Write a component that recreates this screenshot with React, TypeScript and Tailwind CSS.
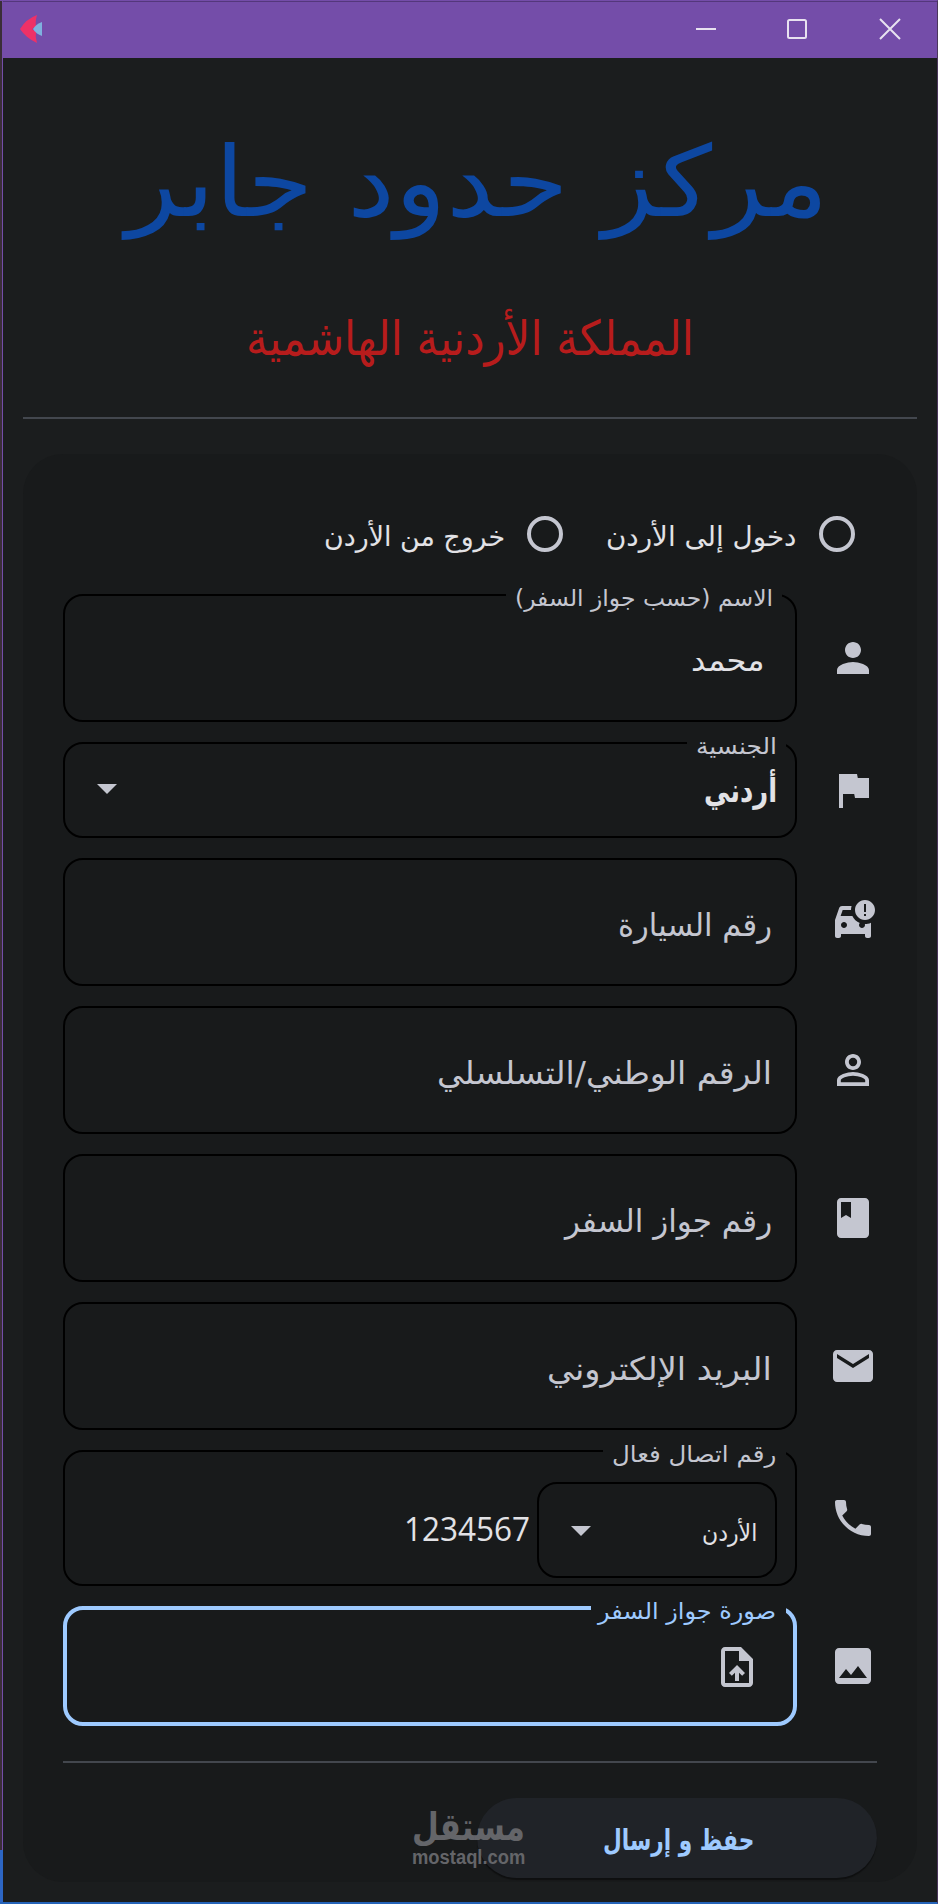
import { useLayoutEffect, useRef, useState } from 'react'
import type { ReactNode } from 'react'
import {
    MdPerson, MdFlag, MdCarCrash, MdPersonOutline, MdBook, MdEmail,
    MdPhone, MdImage, MdArrowDropDown, MdUploadFile
} from 'react-icons/md'

// Stretches one line of text to a fixed width, anchored at its right edge
function Fit({ width, className = '', children }: { width: number; className?: string; children: ReactNode }) {
    const ref = useRef<HTMLSpanElement>(null)
    const [scale, setScale] = useState(1)
    useLayoutEffect(() => {
        if (ref.current) setScale(width / ref.current.offsetWidth)
    }, [width])
    return (
        <span className={`flex shrink-0 justify-start whitespace-nowrap ${className}`} style={{ width }}>
            <span ref={ref} className="shrink-0 origin-right" style={{ transform: `scaleX(${scale})` }}>{children}</span>
        </span>
    )
}

function Label({ width, className, children }: { width: number; className: string; children: ReactNode }) {
    return (
        <div className={`absolute bg-[#181a1b] text-[23px] leading-[26px] ${className}`}>
            <Fit width={width}>{children}</Fit>
        </div>
    )
}

function Row({ icon, children }: { icon: ReactNode; children: ReactNode }) {
    return (
        <div className="flex items-center">
            <div className="ml-8 flex w-12 shrink-0 justify-center text-5xl text-[#c4c6d0]">{icon}</div>
            {children}
        </div>
    )
}

const box = 'relative flex w-[734px] rounded-[20px] border-2 border-black'

const hints = [
    { text: 'رقم السيارة', width: 154, icon: <MdCarCrash /> },
    { text: 'الرقم الوطني/التسلسلي', width: 335, icon: <MdPersonOutline /> },
    { text: 'رقم جواز السفر', width: 207, icon: <MdBook /> },
    { text: 'البريد الإلكتروني', width: 225, icon: <MdEmail /> },
]

export default function App() {
    return (
        <div className="flex h-[1904px] w-[938px] overflow-hidden border-t border-r border-b-2 border-t-[#744da9] border-r-[#4b365c] border-b-[#2563b8] bg-[#1b1d1e] font-['DejaVu_Sans',sans-serif]">
            <div className="flex w-[3px] shrink-0 flex-col">
                <div className="flex-1 border-r border-[#744da9] bg-[#3a2e38]" />
                <div className="h-[52px] bg-[#2d66c4]" />
            </div>
            <div className="flex flex-1 flex-col">
                <header className="flex h-[57px] shrink-0 items-center justify-between border-t border-[#54377c] bg-[#744da9] pr-[36px] pb-[2px] pl-[17px]">
                    <svg width="23" height="28" viewBox="0 0 23 28">
                        <path d="M17 0Q15 7 16 11L12 14l4 3q-1 5 1 11Q6 23 0 14 6 4 17 0Z" fill="#ee3167" />
                        <path d="M22 7v14q-6-2-9-7 3-5 9-7Z" fill="#7fb1de" />
                    </svg>
                    <div className="flex items-center gap-[70px]">
                        <svg width="22" height="22" viewBox="0 0 22 22" fill="none" stroke="#e8e2f0" strokeWidth="2"><path d="M1 11h20" /></svg>
                        <svg width="22" height="22" viewBox="0 0 22 22" fill="none" stroke="#e8e2f0" strokeWidth="2"><rect x="1" y="2" width="18" height="18" rx="1.5" /></svg>
                        <svg width="22" height="22" viewBox="0 0 22 22" fill="none" stroke="#e8e2f0" strokeWidth="2"><path d="M1 1l20 20M21 1L1 21" /></svg>
                    </div>
                </header>

                <main dir="rtl" className="flex flex-1 flex-col px-5">
                    <h1 className="mt-[64px] mr-[89px] text-[98px] leading-[120px] text-[#0d47a1]">
                        <Fit width={702}>مركز حدود جابر</Fit>
                    </h1>
                    <h2 className="mt-[66px] mr-[223px] text-[48px] leading-[60px] text-[#b71c1c]">
                        <Fit width={448}>المملكة الأردنية الهاشمية</Fit>
                    </h2>
                    <hr className="mt-auto border-0 border-t-2 border-[#43474e]" />

                    <section className="mt-[35px] mb-5 h-[1428px] rounded-[40px] bg-[#181a1b] px-10 pt-[62px]">
                        <div className="flex h-9 items-center pr-[22px] text-[27px] leading-9 text-[#e2e2e6]">
                            <span className="size-9 rounded-full border-4 border-[#c4c6d0]" />
                            <Fit width={190} className="mt-[5px] mr-[23px]">دخول إلى الأردن</Fit>
                            <span className="mr-[43px] size-9 rounded-full border-4 border-[#c4c6d0]" />
                            <Fit width={181} className="mt-[5px] mr-[22px]">خروج من الأردن</Fit>
                        </div>

                        <div className="mt-[42px] flex flex-col gap-5">
                            <Row icon={<MdPerson />}>
                                <div className={`${box} h-32 items-center pr-[30px]`}>
                                    <Label width={258} className="-top-[11px] right-[13px] pr-[9px] pl-[9px] text-[#c4c6d0]">الاسم (حسب جواز السفر)</Label>
                                    <Fit width={74} className="mt-[5px] text-[30px] text-[#e2e2e6]">محمد</Fit>
                                </div>
                            </Row>
                            <Row icon={<MdFlag />}>
                                <div className={`${box} h-24 items-center justify-between pr-[18px] pl-[18px]`}>
                                    <Label width={81} className="-top-[11px] right-[9px] pr-[9px] pl-[9px] text-[#c4c6d0]">الجنسية</Label>
                                    <Fit width={73} className="mt-[2px] text-[33px] font-bold text-[#e2e2e6]">أردني</Fit>
                                    <MdArrowDropDown className="mb-1 text-5xl text-[#c4c6d0]" />
                                </div>
                            </Row>
                            {hints.map((h) => (
                                <Row key={h.text} icon={h.icon}>
                                    <div className={`${box} h-32 items-center pr-[23px]`}>
                                        <Fit width={h.width} className="mt-[6px] text-[32px] text-[#c4c6d0]">{h.text}</Fit>
                                    </div>
                                </Row>
                            ))}
                            <Row icon={<MdPhone />}>
                                <div className={`${box} h-[136px] items-center pr-[18px]`}>
                                    <Label width={164} className="-top-[11px] right-[9px] pr-[10px] pl-[9px] text-[#c4c6d0]">رقم اتصال فعال</Label>
                                    <div className="mt-6 flex h-24 w-60 items-center justify-between rounded-[20px] border-2 border-black pr-[18px] pl-[18px]">
                                        <Fit width={55} className="mt-[5px] text-[24px] text-[#e2e2e6]">الأردن</Fit>
                                        <MdArrowDropDown className="text-5xl text-[#c4c6d0]" />
                                    </div>
                                    <Fit width={126} className="mt-[22px] mr-[7px] font-['Open_Sans',sans-serif] text-[32px] text-[#e2e2e6]">1234567</Fit>
                                </div>
                            </Row>
                            <Row icon={<MdImage />}>
                                <div className="relative flex h-[120px] w-[734px] items-center rounded-[20px] border-4 border-[#9ecaff] pr-8">
                                    <Label width={178} className="-top-[12px] right-[7px] pr-[10px] pl-[7px] text-[#9ecaff]">صورة جواز السفر</Label>
                                    <MdUploadFile className="mt-[2px] text-5xl text-[#c4c6d0]" />
                                </div>
                            </Row>
                        </div>

                        <hr className="mt-[35px] border-0 border-t-2 border-[#43474e]" />

                        <div className="relative mt-[35px]">
                            <button className="flex h-20 w-[400px] items-center justify-center rounded-full bg-[#202328] pt-[6px] pl-[2px] text-[29px] font-bold text-[#9ecaff] shadow-[0_2px_1px_#0006]">
                                <Fit width={151} className="-mr-[2px]">حفظ و إرسال</Fit>
                            </button>
                            <div className="absolute top-[9px] left-[349px] text-[#646569]">
                                <Fit width={113} className="mr-[2px] text-[38px] leading-[40px] font-bold">مستقل</Fit>
                                <Fit width={113} className="mr-[2px] font-['Liberation_Sans',sans-serif] text-[20px] leading-[20px] font-bold">mostaql.com</Fit>
                            </div>
                        </div>
                    </section>
                </main>
            </div>
        </div>
    )
}
